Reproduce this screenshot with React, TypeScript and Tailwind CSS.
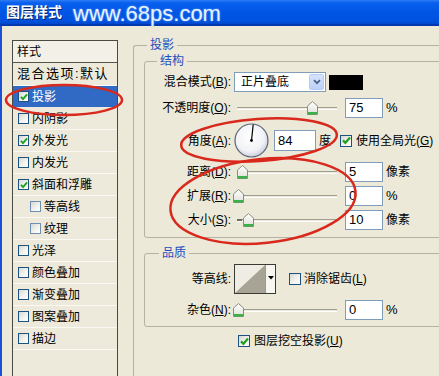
import React from "react";

const CJK = "font-['Liberation_Sans','Noto_Sans_CJK_SC',sans-serif]";

function Check({ checked, size = 12, light }: { checked?: boolean; size?: number; light?: boolean }) {
  return (
    <span
      className={`flex shrink-0 items-center justify-center border ${light ? "border-[#6F8FB0]" : "border-[#1C5180]"} bg-[linear-gradient(135deg,#D8D8D2_0%,#F2F2EE_55%,#FFFFFF_100%)]`}
      style={{ width: size, height: size }}
    >
      {checked && (
        <svg width={size - 3} height={size - 3} viewBox="0 0 9 9">
          <path d="M1 4.4 L3.4 6.8 L8 1.6" fill="none" stroke="#21A121" strokeWidth="2.2" />
        </svg>
      )}
    </span>
  );
}

function Thumb() {
  return (
    <svg width="11" height="14" viewBox="0 0 11 14">
      <defs>
        <linearGradient id="thg" x1="0" y1="0" x2="0" y2="1">
          <stop offset="0" stopColor="#FFFFFF" />
          <stop offset="1" stopColor="#E0E0D8" />
        </linearGradient>
      </defs>
      <path d="M0.5 5 L5.5 0.5 L10.5 5 V13.5 H0.5 Z" fill="url(#thg)" stroke="#8C8C80" />
      <rect x="1" y="11" width="9" height="2.5" fill="#3DB04C" />
    </svg>
  );
}

function Slider({ thumb, tick }: { thumb: number; tick?: boolean }) {
  return (
    <div className="relative ml-[3px] h-[14px] w-[103px]">
      <div className="absolute left-[3px] right-0 top-[6px] h-[3px] border-t border-t-[#9F9D90] border-b border-b-[#FFFFFF]" />
      {tick && <div className="absolute left-[3px] top-[6px] h-[2px] w-[5px] bg-[#6E6E66]" />}
      <div className="absolute top-0" style={{ left: thumb }}>
        <Thumb />
      </div>
    </div>
  );
}

function NumBox({ v, w = 38, h = 20 }: { v: string; w?: number; h?: number }) {
  return (
    <div
      className="flex items-center border border-[#7F9DB9] bg-white pl-[3px] font-['Liberation_Sans',sans-serif] text-[13px] text-black"
      style={{ width: w, height: h }}
    >
      {v}
    </div>
  );
}

function Label({ children }: { children: React.ReactNode }) {
  return <div className="w-[86px] shrink-0 text-right text-[12px] leading-[14px] text-black">{children}</div>;
}

function U({ c }: { c: string }) {
  return <span className="underline underline-offset-[1px]">{c}</span>;
}

const listItems: { t: string; checked?: boolean; sub?: boolean; sel?: boolean }[] = [
  { t: "投影", checked: true, sel: true },
  { t: "内阴影" },
  { t: "外发光", checked: true },
  { t: "内发光" },
  { t: "斜面和浮雕", checked: true },
  { t: "等高线", sub: true },
  { t: "纹理", sub: true },
  { t: "光泽" },
  { t: "颜色叠加" },
  { t: "渐变叠加" },
  { t: "图案叠加" },
  { t: "描边" },
];

export default function App() {
  return (
    <div className={`relative h-[376px] w-[439px] overflow-hidden bg-[#ECE9D8] ${CJK} text-[12px] text-black`}>
      {/* title bar */}
      <div className="flex h-[26px] items-center border-b-[2px] border-b-[#0038B0] bg-[linear-gradient(180deg,#2E7BF4_0%,#0860EE_12%,#0055E5_50%,#0052E0_85%,#0048CC_100%)] pl-[6px]">
        <span className="text-[14px] font-bold leading-[16px] text-white [text-shadow:1px_1px_0_#0A246A]">图层样式</span>
        <span className="ml-[11px] mt-[3px] font-['Liberation_Sans',sans-serif] text-[22px] leading-[22px] tracking-[0px] text-[#E4F1FF] [text-shadow:0_0_2px_#7FB4FF]">
          www.68ps.com
        </span>
      </div>

      {/* body */}
      <div className="flex h-[350px] items-start border-l-[2px] border-l-[#1A4FD6]">
        {/* left list */}
        <div className="ml-[10px] mt-[14px] h-[360px] w-[106px] shrink-0 border border-[#4A4A42] bg-[#EDEADC]">
          <div className="flex h-[22px] items-center border-b border-b-[#55554C] bg-[#F3F1E7] pl-[4px] leading-[14px]">样式</div>
          <div className="flex h-[23px] items-center border-b border-b-[#FAF9F3] pl-[4px] text-[13px] tracking-[1.5px] leading-[14px]">
            混合选项:默认
          </div>
          {listItems.map((it) => (
            <div
              key={it.t}
              className={`flex h-[22px] items-center border-b ${it.sel ? "border-b-[#EDEADC] bg-[#316AC5] text-white" : "border-b-[#FAF9F3]"} ${it.sub ? "pl-[17px]" : "pl-[5px]"}`}
            >
              <Check checked={it.checked} size={11} light={it.sub} />
              <span className="ml-[3px] leading-[14px]">{it.t}</span>
            </div>
          ))}
        </div>

        {/* right: 投影 group */}
        <fieldset className="ml-[15px] mt-[11px] min-h-[400px] w-[330px] shrink-0 rounded-tl-[3px] border-l border-t border-[#B5B2A2]">
          <legend className="ml-[13px] px-[3px] text-[12px] leading-[16px] text-[#1D4EBF]">投影</legend>

          {/* 结构 */}
          <fieldset className="ml-[10px] w-[320px] rounded-[3px] border border-[#B5B2A2] pb-[7px] pt-[3px]">
            <legend className="ml-[12px] px-[3px] text-[12px] leading-[16px] text-[#1D4EBF]">结构</legend>
            <div className="flex h-[20px] items-center">
              <Label>
                混合模式(<U c="B" />):
              </Label>
              <div className="ml-[3px] flex h-[20px] w-[92px] items-center justify-between border border-[#7F9DB9] bg-white pl-[6px]">
                <span className="leading-[14px]">正片叠底</span>
                <span className="mr-[1px] flex h-[16px] w-[15px] items-center justify-center rounded-[2px] border border-[#B6CBF5] bg-[linear-gradient(180deg,#D7E3FD_0%,#BCD0F8_100%)]">
                  <svg width="8" height="6" viewBox="0 0 8 6">
                    <path d="M1 1.2 L4 4.2 L7 1.2" fill="none" stroke="#4D6185" strokeWidth="1.8" />
                  </svg>
                </span>
              </div>
              <div className="ml-[3px] h-[15px] w-[34px] bg-black" />
            </div>

            <div className="mt-[6px] flex h-[20px] items-center">
              <Label>
                不透明度(<U c="O" />):
              </Label>
              <Slider thumb={73} />
              <div className="ml-[8px]">
                <NumBox v="75" />
              </div>
              <span className="ml-[3px] font-['Liberation_Sans',sans-serif] text-[13px]">%</span>
            </div>

            <div className="mt-[5px] flex h-[35px] items-center">
              <Label>
                角度(<U c="A" />):
              </Label>
              <svg className="ml-[3px]" width="35" height="35" viewBox="0 0 35 35">
                <defs>
                  <radialGradient id="dialg" cx="0.45" cy="0.4" r="0.6">
                    <stop offset="0" stopColor="#FFFFFF" />
                    <stop offset="0.7" stopColor="#F2F3F7" />
                    <stop offset="1" stopColor="#CBD0DC" />
                  </radialGradient>
                </defs>
                <circle cx="17.5" cy="17.5" r="16.5" fill="url(#dialg)" stroke="#5C6478" strokeWidth="1.2" />
                <line x1="17.5" y1="17.5" x2="19.2" y2="1.5" stroke="#000" strokeWidth="1.2" />
                <circle cx="17.5" cy="17.5" r="1.4" fill="#000" />
              </svg>
              <div className="ml-[5px]">
                <NumBox v="84" w={42} h={21} />
              </div>
              <span className="ml-[3px] leading-[14px]">度</span>
              <span className="ml-[9px]">
                <Check checked size={12} />
              </span>
              <span className="ml-[4px] leading-[14px]">
                使用全局光(<U c="G" />)
              </span>
            </div>

            <div className="mt-[4px] flex h-[20px] items-center">
              <Label>
                距离(<U c="D" />):
              </Label>
              <Slider thumb={3} />
              <div className="ml-[8px]">
                <NumBox v="5" />
              </div>
              <span className="ml-[3px] leading-[14px]">像素</span>
            </div>

            <div className="mt-[4px] flex h-[20px] items-center">
              <Label>
                扩展(<U c="R" />):
              </Label>
              <Slider thumb={-1} />
              <div className="ml-[8px]">
                <NumBox v="0" />
              </div>
              <span className="ml-[3px] font-['Liberation_Sans',sans-serif] text-[13px]">%</span>
            </div>

            <div className="mt-[4px] flex h-[20px] items-center">
              <Label>
                大小(<U c="S" />):
              </Label>
              <Slider thumb={9} tick />
              <div className="ml-[8px]">
                <NumBox v="10" />
              </div>
              <span className="ml-[3px] leading-[14px]">像素</span>
            </div>
          </fieldset>

          {/* 品质 */}
          <fieldset className="ml-[10px] mt-[7px] w-[320px] rounded-[3px] border border-[#B5B2A2] pb-[6px] pt-[3px]">
            <legend className="ml-[14px] px-[3px] text-[12px] leading-[16px] text-[#1D4EBF]">品质</legend>
            <div className="flex h-[30px] items-center">
              <Label>等高线:</Label>
              <div className="ml-[3px] flex h-[30px] w-[42px] border border-[#3A3A34] bg-white">
                <svg width="30" height="28" viewBox="0 0 30 28">
                  <rect width="30" height="28" fill="#EEECE3" />
                  <path d="M0 28 L30 0 L30 28 Z" fill="#A8A495" />
                </svg>
                <div className="flex flex-1 justify-center border-l border-l-[#9A9A90] bg-[#F7F6F1] pt-[11px]">
                  <svg width="6" height="4" viewBox="0 0 6 4">
                    <path d="M0 0 H6 L3 3.5 Z" fill="#000" />
                  </svg>
                </div>
              </div>
              <span className="ml-[13px]">
                <Check size={12} />
              </span>
              <span className="ml-[3px] leading-[14px]">
                消除锯齿(<U c="L" />)
              </span>
            </div>

            <div className="mt-[6px] flex h-[20px] items-center">
              <Label>
                杂色(<U c="N" />):
              </Label>
              <Slider thumb={-1} />
              <div className="ml-[8px]">
                <NumBox v="0" />
              </div>
              <span className="ml-[3px] font-['Liberation_Sans',sans-serif] text-[13px]">%</span>
            </div>
          </fieldset>

          <div className="mt-[7px] flex h-[14px] items-center pl-[104px]">
            <Check checked size={12} />
            <span className="ml-[4px] leading-[14px]">
              图层挖空投影(<U c="U" />)
            </span>
          </div>
        </fieldset>
      </div>

      {/* red annotation ellipses */}
      <svg className="pointer-events-none absolute left-0 top-0" width="439" height="376" viewBox="0 0 439 376">
        <ellipse cx="64" cy="100" rx="58" ry="15" fill="none" stroke="#D9281C" strokeWidth="2.5" />
        <ellipse cx="259" cy="140" rx="78" ry="21" transform="rotate(-4 259 140)" fill="none" stroke="#D9281C" strokeWidth="2.5" />
        <ellipse cx="263" cy="201" rx="93" ry="42" transform="rotate(-6 263 201)" fill="none" stroke="#D9281C" strokeWidth="2.5" />
      </svg>
    </div>
  );
}
